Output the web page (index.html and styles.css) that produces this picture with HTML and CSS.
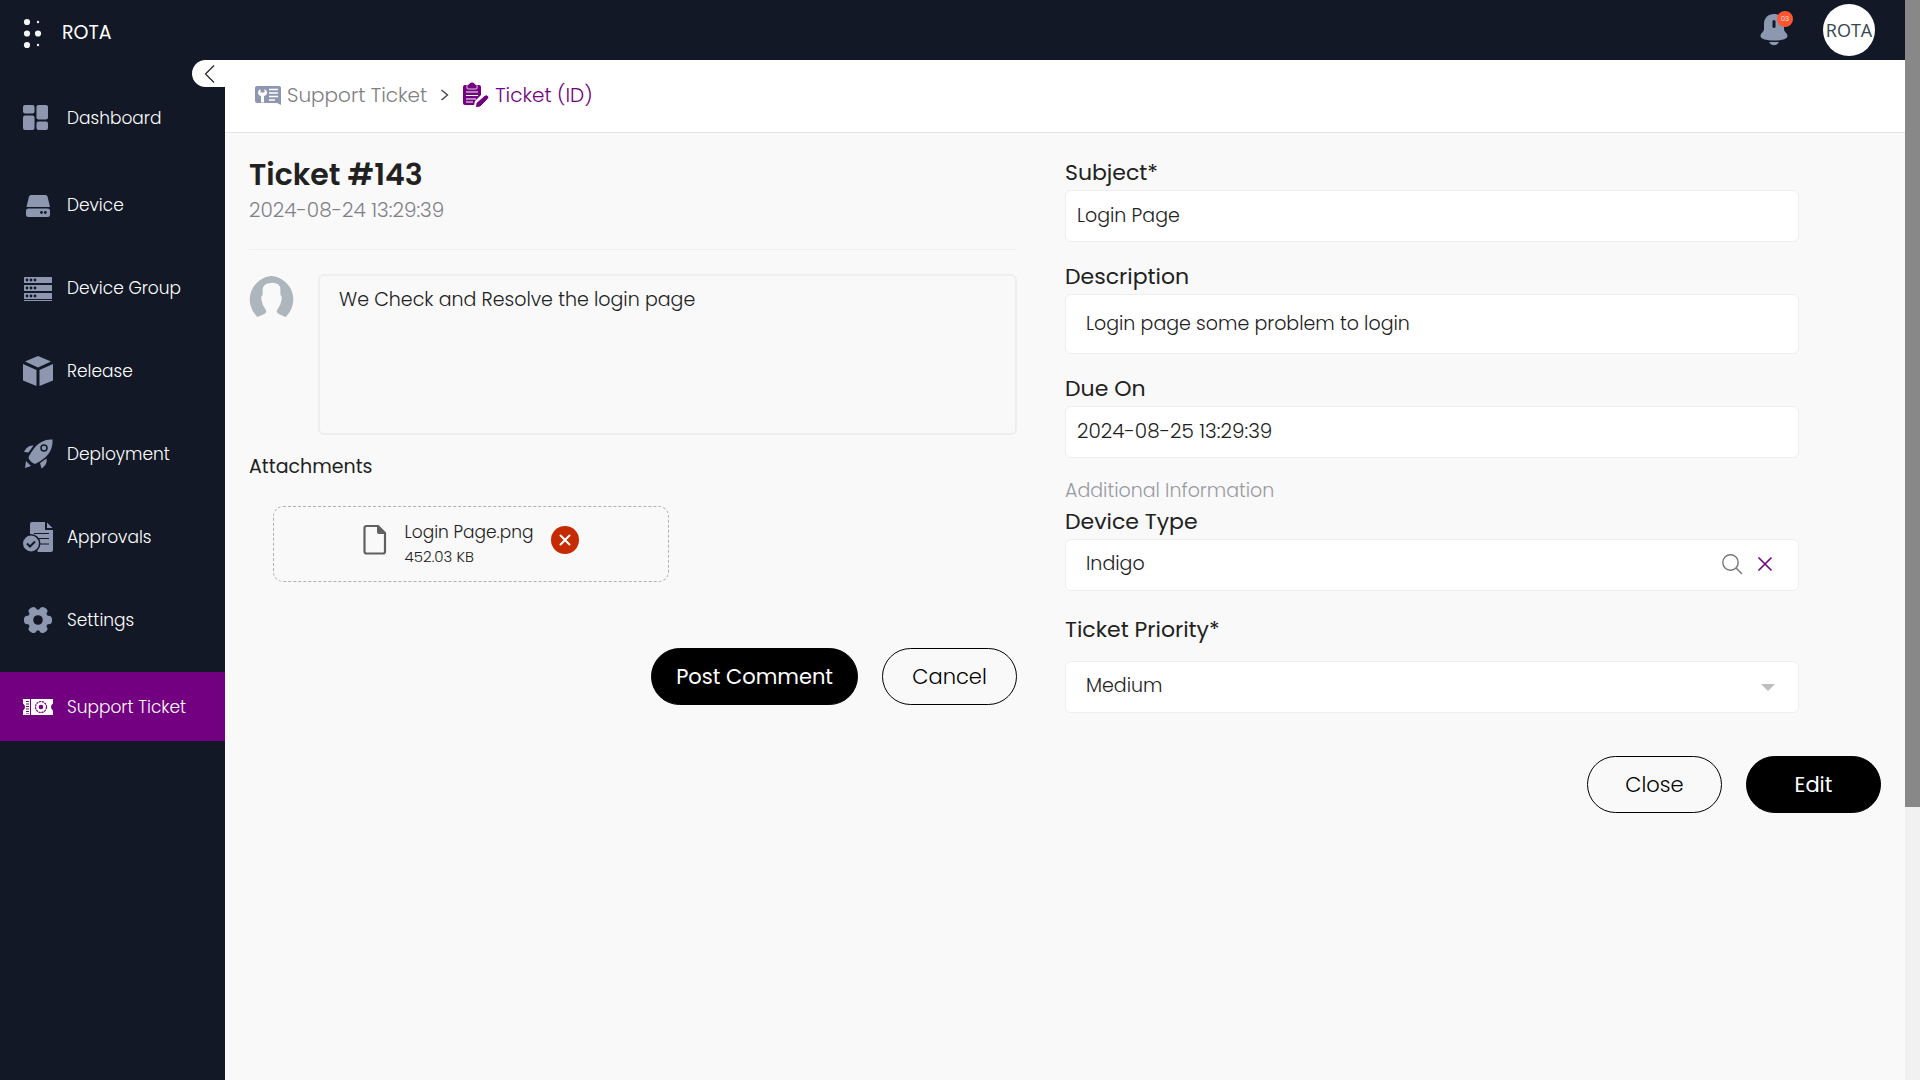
FILE: index.html
```html
<!DOCTYPE html>
<html lang="en">
<head>
<meta charset="utf-8">
<title>ROTA - Ticket #143</title>
<meta name="viewport" content="width=device-width, initial-scale=1">
<link rel="stylesheet" href="styles.css">
</head>
<body>
<div class="app">
  <header class="topbar">
    <a class="brand" href="#">
      <svg class="brand-mark" viewBox="0 0 20 32" aria-hidden="true"><g fill="#f5f5f5"><circle cx="4" cy="5" r="3.100"/><circle cx="4" cy="16.500" r="3.100"/><circle cx="4" cy="28" r="3.100"/><circle cx="15" cy="16.500" r="3.100"/><circle cx="15" cy="5" r="1.200"/><circle cx="15" cy="28" r="1.200"/></g></svg>
      <span>ROTA</span>
    </a>
    <div class="topbar-actions">
      <button class="bell" type="button" aria-label="Notifications">
        <svg viewBox="0 0 28 34" aria-hidden="true"><path fill="#8d98b0" d="M14 1C8 1 4 5 4 11v5c0 3-3.500 4-3.500 7 0 3 6 4.500 13.500 4.500S27.500 26 27.500 23c0-3-3.500-4-3.500-7v-5C24 5 20 1 14 1z"/><path fill="#8d98b0" d="M9 29h10c-1 2-3 3.300-5 3.300S10 31 9 29z"/><rect x="12.500" y="7" width="3" height="8" rx="1.500" fill="#121826"/></svg>
        <span class="badge">03</span>
      </button>
      <a class="profile" href="#">ROTA</a>
    </div>
  </header>

  <nav class="sidebar">
    <ul class="nav-group">
      <li><a class="nav-item" href="#">
        <svg viewBox="0 0 30 30" aria-hidden="true"><g fill="#8d98b0"><rect x="0" y="2" width="11.500" height="8.500" rx="2"/><rect x="0" y="12.500" width="11.500" height="14.500" rx="2"/><rect x="13.500" y="2" width="11.500" height="14.500" rx="2"/><rect x="13.500" y="18.500" width="11.500" height="8.500" rx="2"/></g></svg>
        Dashboard</a></li>
    </ul>
    <ul class="nav-group">
      <li><a class="nav-item" href="#">
        <svg viewBox="0 0 30 30" aria-hidden="true"><path fill="#8d98b0" d="M8 5h14.500q1.500 0 2 1.500L27 17H3.500L6 6.500Q6.500 5 8 5z"/><rect x="3" y="18.500" width="24" height="8.500" rx="2.500" fill="#8d98b0"/><circle cx="18.500" cy="22.500" r="1.400" fill="#121826"/><circle cx="22.300" cy="22.500" r="1.400" fill="#121826"/></svg>
        Device</a></li>
      <li><a class="nav-item" href="#">
        <svg viewBox="0 0 30 30" aria-hidden="true"><g fill="#8d98b0"><rect x="1" y="4" width="28" height="6" rx=".5"/><rect x="1" y="12" width="28" height="6" rx=".5"/><rect x="1" y="20" width="28" height="6" rx=".5"/><path d="M1 27h28v1H1z"/></g><g fill="#121826"><circle cx="4" cy="7" r="1.400"/><circle cx="8" cy="7" r="1.400"/><circle cx="12" cy="7" r="1.400"/><circle cx="4" cy="15" r="1.400"/><circle cx="8" cy="15" r="1.400"/><circle cx="12" cy="15" r="1.400"/><circle cx="4" cy="23" r="1.400"/><circle cx="8" cy="23" r="1.400"/><circle cx="12" cy="23" r="1.400"/></g></svg>
        Device Group</a></li>
      <li><a class="nav-item" href="#">
        <svg viewBox="0 0 30 30" aria-hidden="true"><path fill="#8d98b0" d="M15 0l13 5.500L15 11.500 2 5.500zM0 8l13.500 6v16L0 24.500zM30 8l-13.500 6v16L30 24.500z"/></svg>
        Release</a></li>
      <li><a class="nav-item" href="#">
        <svg viewBox="0 0 30 30" aria-hidden="true"><path fill="#8d98b0" d="M29.500.5C22 0 15.500 3.500 11 9.500c-2 2.500-3.500 5-5 7.500-1 2 0 3.500 1.500 5s3.500 3.500 5.500 2.500c3-1.500 6-3.500 8.500-5.500 5.500-4.500 8.500-11 8-18.500z"/><path fill="#8d98b0" d="M10.500 6.500C6 6 3 9 1 13l4.500.5zM23.500 19.500c1 5-2 8-5 10L17 24zM3 22l5 5-6 2z"/><circle cx="21" cy="9" r="3" fill="#8d98b0" stroke="#121826" stroke-width="1.500"/></svg>
        Deployment</a></li>
      <li><a class="nav-item" href="#">
        <svg viewBox="0 0 30 30" aria-hidden="true"><path fill="#8d98b0" d="M9 0h13v8h8v20q0 2-2 2H15L7 16V2q0-2 2-2zM24 .5L29.500 6H24z"/><path stroke="#121826" stroke-width="1.200" d="M11 11.500h15M15 16.500h11M17 22h9"/><circle cx="8" cy="21.500" r="8.700" fill="#8d98b0" stroke="#121826" stroke-width="1.500"/><path fill="none" stroke="#121826" stroke-width="2" d="M4 21.500l3 3 5-5"/></svg>
        Approvals</a></li>
      <li><a class="nav-item" href="#">
        <svg viewBox="0 0 30 30" aria-hidden="true"><g fill="#8d98b0"><circle cx="15" cy="15" r="10.500"/><rect x="1" y="10.800" width="28" height="8.400" rx="3.500"/><rect x="1" y="10.800" width="28" height="8.400" rx="3.500" transform="rotate(60 15 15)"/><rect x="1" y="10.800" width="28" height="8.400" rx="3.500" transform="rotate(120 15 15)"/></g><circle cx="15" cy="15" r="4.800" fill="#121826"/></svg>
        Settings</a></li>
    </ul>
    <ul class="nav-group">
      <li><a class="nav-item active" href="#" aria-current="page">
        <svg viewBox="0 0 30 30" aria-hidden="true"><path fill="#fff" d="M0 7h30v4.500q-2 1-2 3.500t2 3.500V23H0v-4.500q2-1 2-3.500t-2-3.500z"/><path stroke="#720080" d="M7.500 7v16"/><path stroke="#720080" stroke-width="3" stroke-dasharray="1 1.500" d="M4.500 9v13"/><circle cx="18" cy="15" r="5.500" fill="none" stroke="#720080" stroke-width="1.200" stroke-dasharray="2.200 .7"/><circle cx="18" cy="15" r="2.300" fill="#720080"/></svg>
        Support Ticket</a></li>
    </ul>
  </nav>

  <main class="main">
    <button class="collapse" type="button" aria-label="Collapse menu">
      <svg viewBox="0 0 12 20" aria-hidden="true"><path d="M10 1.500L1.500 10l8.500 8.500" fill="none" stroke="#222" stroke-width="1.200"/></svg>
    </button>
    <nav class="crumbs" aria-label="Breadcrumb">
      <a class="crumb" href="#">
        <svg viewBox="0 0 26 26" aria-hidden="true"><path fill="#8d98b0" d="M2 4h22q2 0 2 2v17l-4-2H2q-2 0-2-2V6q0-2 2-2z"/><path fill="#fff" d="M5.500 7v3.500h4V7Q12 8 12 10.500q0 2.500-3 3.500v6.500H6V14q-3-1-3-3.500Q3 8 5.500 7z"/><path stroke="#fff" stroke-width="1.500" d="M14 7.500h9M14 11h9M14 14.500h9M14 18h6"/></svg>
        Support Ticket</a>
      <svg class="crumb-sep" viewBox="0 0 10 14" aria-hidden="true"><path d="M1.500 2l6 5-6 5" fill="none" stroke="#444" stroke-width="1.400"/></svg>
      <a class="crumb current" href="#" aria-current="page">
        <svg viewBox="0 0 26 26" aria-hidden="true"><path fill="#720080" d="M2 3h14q2 0 2 2v8l-6 6-1 4H2q-2 0-2-2V5q0-2 2-2z"/><path fill="#720080" stroke="#fff" stroke-width=".8" d="M4 6V3.500q0-1 2-1.500Q6.500 0 9 0t3 2q2 .5 2 1.500V6q0 1-1 1H5Q4 7 4 6z"/><path stroke="#fff" stroke-width="1.200" d="M3 10h12M3 13.500h12M3 17h10M3 20h7"/><path fill="#720080" stroke="#fff" stroke-width="1" d="M12.500 25.800l.5-4.800 8.500-7.500q2-1.500 3.700.3 1.300 1.700-.2 3.200L17 25z"/></svg>
        Ticket (ID)</a>
    </nav>

    <div class="content">
      <section class="thread">
        <div class="ticket-head">
          <h1>Ticket #143</h1>
          <time datetime="2024-08-24T13:29:39">2024-08-24 13:29:39</time>
        </div>
        <div class="comment">
          <svg class="avatar" viewBox="1 -1 43 43" aria-hidden="true"><path fill="#adb5bd" d="M22.500 1A22.500 22.500 0 0 0 9 40l5-2q3.500-1.500 3.500-4-4-5-4.500-10-1-4 1-5V14q0-6 8-6.500 9-.5 9 6.500v5q2 1 1 5-.5 5-4.500 10 0 2.500 3.500 4l5 2A22.500 22.500 0 0 0 22.500 1z"/></svg>
          <textarea aria-label="Comment">We Check and Resolve the login page</textarea>
        </div>
        <h2>Attachments</h2>
        <div class="file">
          <svg class="file-icon" viewBox="0 0 24 32" aria-hidden="true"><path fill="none" stroke="#606060" stroke-width="2.200" stroke-linejoin="round" d="M3.500 2H15l7 7v18.500q0 2-2 2H3.500q-2 0-2-2V4q0-2 2-2z"/><path fill="#606060" d="M14 1.500V8q0 2 2 2h6.500z"/></svg>
          <div class="file-info">
            <span class="file-name">Login Page.png</span>
            <span class="file-size">452.03 KB</span>
          </div>
          <button class="file-remove" type="button" aria-label="Remove Login Page.png">
            <svg viewBox="0 0 28 28" aria-hidden="true"><path d="M9.500 9.500l9 9M18.500 9.500l-9 9" stroke="#fff" stroke-width="2" stroke-linecap="round"/></svg>
          </button>
        </div>
        <div class="actions thread-actions">
          <button class="btn btn-solid" type="button">Post Comment</button>
          <button class="btn btn-outline" type="button">Cancel</button>
        </div>
      </section>

      <form class="details">
        <div class="field">
          <label for="subject">Subject*</label>
          <input id="subject" class="control" type="text" value="Login Page">
        </div>
        <div class="field">
          <label for="description">Description</label>
          <input id="description" class="control inset tall" type="text" value="Login page some problem to login">
        </div>
        <div class="field">
          <label for="due">Due On</label>
          <input id="due" class="control date" type="text" value="2024-08-25 13:29:39">
        </div>
        <p class="section-note">Additional Information</p>
        <div class="field">
          <label for="device-type">Device Type</label>
          <div class="control inset lookup">
            <input id="device-type" type="text" value="Indigo">
            <button type="button" aria-label="Search"><svg viewBox="0 0 22 22" aria-hidden="true"><g fill="none" stroke="#777" stroke-width="1.400"><circle cx="9.500" cy="9.500" r="7.700"/><path d="M15 15l6 6"/></g></svg></button>
            <button type="button" aria-label="Clear"><svg viewBox="0 0 22 22" aria-hidden="true"><path d="M4.500 4.500l13 13M17.500 4.500l-13 13" stroke="#720080" stroke-width="1.600"/></svg></button>
          </div>
        </div>
        <div class="field spaced">
          <label for="priority">Ticket Priority*</label>
          <div class="select-wrap">
            <select id="priority" class="control inset"><option>Medium</option><option>Low</option><option>High</option></select>
            <svg class="caret" viewBox="0 0 14 7" aria-hidden="true"><path fill="#bdbdbd" d="M0 0h14L7 7z"/></svg>
          </div>
        </div>
        <div class="actions form-actions">
          <button class="btn btn-outline" type="button">Close</button>
          <button class="btn btn-solid" type="button">Edit</button>
        </div>
      </form>
    </div>
  </main>
  <div class="scrollbar" aria-hidden="true"><div class="thumb"></div></div>
</div>
</body>
</html>
```
FILE: styles.css
```css
:root {
  --navy: #121826;
  --purple: #720080;
  --ink: #212121;
  --page: #f9f9f9;
  --line: #eeeeee;
}

* { box-sizing: border-box; }

body {
  margin: 0;
  font-family: Poppins, Inter, sans-serif;
  font-weight: 300;
  font-size: 19px;
  line-height: 30px;
  color: var(--ink);
  background: var(--page);
}

a { color: inherit; text-decoration: none; }
button, input, select, textarea { font: inherit; color: inherit; }
button { padding: 0; border: 0; background: none; cursor: pointer; }
svg { display: block; }
h1, h2, p, ul { margin: 0; padding: 0; }
ul { list-style: none; }

.app {
  display: grid;
  grid-template-columns: 225px 1fr 15px;
  grid-template-rows: 60px 1fr;
  min-height: 100vh;
}

/* Top bar */
.topbar {
  grid-column: 1 / 3;
  display: flex;
  justify-content: space-between;
  align-items: center;
  padding: 0 30px 0 23px;
  background: var(--navy);
  color: #fff;
}
.brand {
  display: flex;
  align-items: center;
  gap: 19px;
  padding-top: 6px;
  font-weight: 400;
}
.brand-mark { width: 20px; height: 32px; }
.topbar-actions { display: flex; align-items: center; gap: 35px; }
.bell { position: relative; }
.bell svg { width: 28px; height: 34px; }
.badge {
  position: absolute;
  top: -2px;
  right: -5px;
  width: 16px;
  height: 16px;
  border-radius: 50%;
  background: #ff5630;
  color: #fff;
  font-size: 7px;
  line-height: 16px;
  text-align: center;
}
.profile {
  width: 52px;
  height: 52px;
  border-radius: 50%;
  background: #fff;
  color: #37474f;
  font-family: "Open Sans", sans-serif;
  font-weight: 400;
  font-size: 18px;
  line-height: 52px;
  text-align: center;
}

/* Sidebar */
.sidebar {
  display: flex;
  flex-direction: column;
  gap: 18px;
  padding-top: 23px;
  background: var(--navy);
  color: #fff;
}
.nav-group { display: flex; flex-direction: column; gap: 14px; }
.nav-item {
  display: flex;
  align-items: center;
  gap: 14px;
  height: 69px;
  padding-left: 23px;
  font-size: 17px;
}
.nav-item svg { width: 30px; height: 30px; }
.nav-item.active { background: var(--purple); }

/* Breadcrumb */
.main { position: relative; }
.collapse {
  position: absolute;
  top: 0;
  left: -33px;
  width: 48px;
  height: 27px;
  padding-left: 12px;
  border-radius: 14px 0 0 14px;
  background: #fff;
}
.collapse svg { width: 12px; height: 20px; }
.crumbs {
  display: flex;
  align-items: center;
  gap: 13px;
  height: 73px;
  padding: 0 30px 2px;
  background: #fff;
  border-bottom: 1px solid #e5e5e5;
  font-size: 20px;
}
.crumb { display: flex; align-items: center; gap: 6px; color: #808080; }
.crumb svg { width: 26px; height: 26px; }
.crumb.current { color: var(--purple); }
.crumb-sep { width: 10px; height: 14px; }

/* Content */
.content {
  display: grid;
  grid-template-columns: 768fr 816fr;
  gap: 48px;
  padding: 24px;
}
.ticket-head {
  height: 93px;
  border-bottom: 1px solid var(--line);
}
h1 { font-size: 30px; font-weight: 600; line-height: 36px; }
time { display: block; font-size: 20px; line-height: 34px; color: #808088; }
.comment { display: flex; gap: 24px; margin-top: 24px; }
.avatar { flex: none; width: 45px; height: 45px; }
.comment textarea {
  flex: 1;
  height: 161px;
  padding: 9px 19px;
  border: 2px solid var(--line);
  border-radius: 6px;
  background: transparent;
  resize: none;
}
h2 { margin-top: 17px; font-size: 19px; font-weight: 400; line-height: 30px; }
.file {
  display: flex;
  justify-content: center;
  align-items: center;
  gap: 18px;
  width: 396px;
  max-width: 100%;
  height: 76px;
  margin: 24px 0 0 24px;
  padding-bottom: 8px;
  border: 1px dashed #b0b0b0;
  border-radius: 10px;
}
.file-icon { width: 24px; height: 32px; }
.file-info { display: flex; flex-direction: column; padding-top: 8px; }
.file-name { font-size: 17px; line-height: 26px; }
.file-size { font-size: 15px; line-height: 24px; }
.file-remove { border-radius: 50%; background: #c62a00; }
.file-remove svg { width: 28px; height: 28px; }

.actions { display: flex; justify-content: flex-end; gap: 24px; }
.thread-actions { margin-top: 66px; }
.form-actions { margin-top: 43px; }
.btn {
  min-width: 135px;
  height: 57px;
  padding: 0 24px;
  border: 1px solid #000;
  border-radius: 29px;
  color: #000;
  font-size: 21px;
}
.btn-solid { background: #000; color: #fff; font-weight: 400; }

/* Ticket form */
.field { width: 90%; margin-bottom: 19px; }
.field label {
  display: block;
  margin-bottom: 2px;
  font-size: 22px;
  font-weight: 400;
  line-height: 31px;
}
.control {
  display: block;
  width: 100%;
  height: 52px;
  padding: 0 11px 2px;
  border: 1px solid var(--line);
  border-radius: 6px;
  background: #fff;
}
.control.inset { padding: 0 20px 2px; }
.control.tall { height: 60px; }
.control.date { font-size: 20px; }
.section-note { margin-top: -1px; color: #9a9aa2; }
.control.lookup { display: flex; align-items: center; gap: 11px; padding-right: 22px; }
.lookup input { flex: 1; min-width: 0; padding: 0; border: 0; background: none; }
.lookup svg { width: 22px; height: 22px; }
.spaced { padding-top: 4px; }
.spaced label { margin-bottom: 16px; }
.select-wrap { position: relative; }
.select-wrap select { appearance: none; }
.caret {
  position: absolute;
  top: 23px;
  right: 24px;
  width: 14px;
  height: 7px;
  pointer-events: none;
}

/* Page scroll indicator */
.scrollbar { grid-column: 3; grid-row: 1 / 3; background: #f1f1f1; }
.thumb { height: 74.7%; background: #888; }
```
